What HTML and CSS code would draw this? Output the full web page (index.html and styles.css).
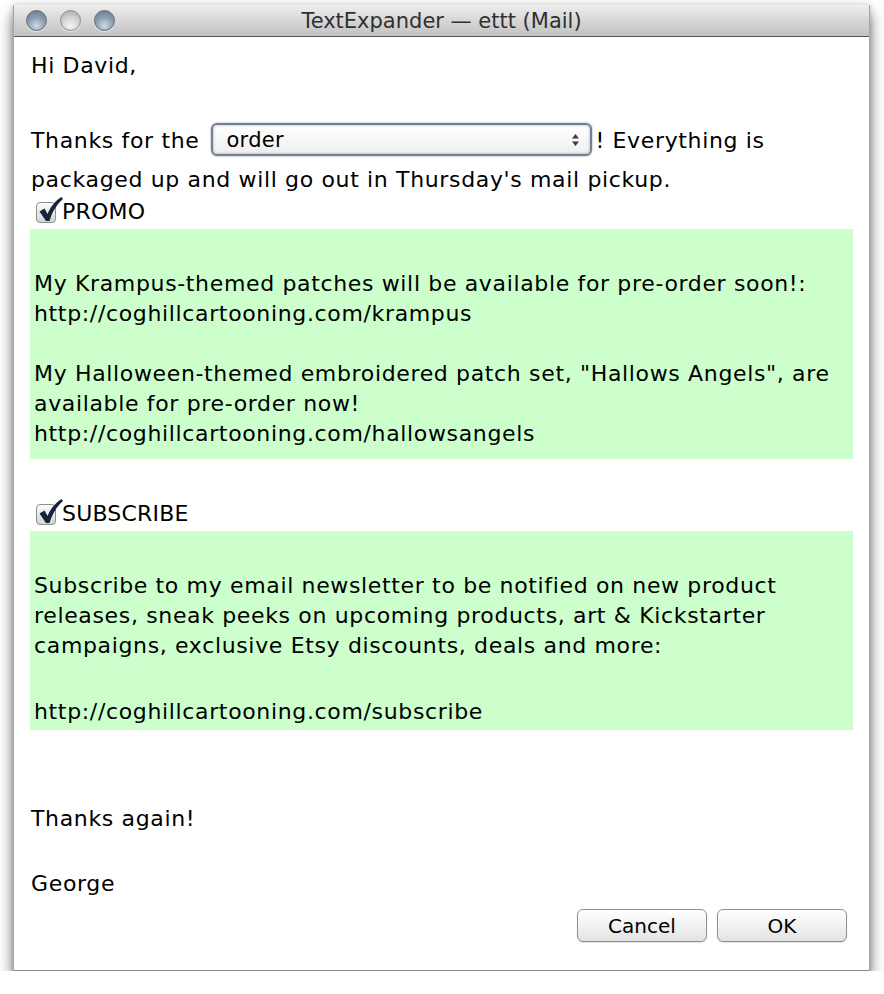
FILE: index.html
```html
<!DOCTYPE html>
<html>
<head>
    <meta charset="UTF-8">
    <title>TextExpander — ettt (Mail)</title>
    <link rel="stylesheet" href="styles.css">
</head>
<body>
    <div class="window">
        <div class="titlebar">
            <div class="lights">
                <span class="light graphite"></span>
                <span class="light grey"></span>
                <span class="light graphite"></span>
            </div>
            <div class="title">TextExpander — ettt (Mail)</div>
        </div>

        <div class="content">
            <p class="line">Hi David,</p>

            <div class="orderRow">
                <span>Thanks for the</span>
                <span class="popup"><span class="popupText">order</span><span class="arrows"><svg width="9" height="14" viewBox="0 0 9 14"><path d="M4.5 1 L8 5.5 L1 5.5 Z M4.5 13 L8 8.5 L1 8.5 Z" fill="#3b3b3b"/></svg></span></span>
                <span>! Everything is</span>
            </div>
            <p class="line packed">packaged up and will go out in Thursday's mail pickup.</p>

            <div class="check">
                <span class="box"><svg width="28" height="28" viewBox="0 0 28 28"><path d="M3.5 15.5 L8.5 12.5 L11.5 18 C14.5 11 19 5 25.5 1 L27 3 C21 8.5 16.5 15 13.5 25 L10 25 Z" fill="#16233d"/></svg></span>PROMO
            </div>
            <div class="snippet">
                <p class="line">&nbsp;</p>
                <p class="line">My Krampus-themed patches will be available for pre-order soon!:<br>http://coghillcartooning.com/krampus</p>
                <p class="line">&nbsp;</p>
                <p class="line">My Halloween-themed embroidered patch set, "Hallows Angels", are available for pre-order now!<br>http://coghillcartooning.com/hallowsangels</p>
            </div>

            <div class="check second">
                <span class="box"><svg width="28" height="28" viewBox="0 0 28 28"><path d="M3.5 15.5 L8.5 12.5 L11.5 18 C14.5 11 19 5 25.5 1 L27 3 C21 8.5 16.5 15 13.5 25 L10 25 Z" fill="#16233d"/></svg></span>SUBSCRIBE
            </div>
            <div class="snippet sub">
                <p class="line">&nbsp;</p>
                <p class="line">Subscribe to my email newsletter to be notified on new product releases, sneak peeks on upcoming products, art &amp; Kickstarter campaigns, exclusive Etsy discounts, deals and more:</p>
                <p class="line url">http://coghillcartooning.com/subscribe</p>
            </div>

            <p class="line thanks">Thanks again!</p>
            <p class="line sign">George</p>

            <div class="buttons">
                <button class="btn">Cancel</button>
                <button class="btn">OK</button>
            </div>
        </div>
    </div>
</body>
</html>
```

FILE: styles.css
```css
body{
    margin : 0;
    background-color : #ffffff;
    font-family : "DejaVu Sans", "Liberation Sans", sans-serif;
    color : #000000;
}

.window{
    box-sizing : border-box;
    width : 857px;
    margin : 5px 0 0 13px;
    background-color : #ffffff;
    border-left : 1px solid #a5a5a5;
    border-right : 1px solid #a5a5a5;
    border-bottom : 1px solid #8c8c8c;
    box-shadow : 0 9px 14px rgba(0,0,0,0.55), 0 0 6px rgba(0,0,0,0.18);
}

.titlebar{
    position : relative;
    box-sizing : border-box;
    height : 32px;
    background : linear-gradient(#ececec, #d6d6d6 50%, #c2c2c2);
    border-top : 1px solid #f4f4f4;
    border-bottom : 1px solid #575757;
}

.lights{
    position : absolute;
    left : 12px;
    top : 4px;
    display : flex;
    gap : 13px;
}

.light{
    width : 21px;
    height : 21px;
    border-radius : 50%;
    border : 1px solid #646b74;
    box-sizing : border-box;
    box-shadow : 0 1px 1px rgba(255,255,255,0.7);
}

.graphite{
    background : radial-gradient(circle at 50% 78%, #cfdbe6 0%, #8fa2b5 45%, #627487 100%);
}

.grey{
    border-color : #8a8a8a;
    background : radial-gradient(circle at 50% 78%, #f4f4f4 0%, #d2d2d2 50%, #a4a4a4 100%);
}

.title{
    text-align : center;
    font-size : 21px;
    line-height : 30px;
    color : #303030;
}

.content{
    padding : 14px 16px 28px 16px;
    letter-spacing : 0.65px;
}

.content p{
    margin : 0;
}

.line{
    font-size : 22px;
    line-height : 30px;
    padding-left : 1px;
}

.orderRow{
    display : flex;
    align-items : center;
    height : 39px;
    margin-top : 40px;
    padding-left : 1px;
    font-size : 22px;
}

.packed{
    line-height : 39px;
}

.popup{
    display : flex;
    align-items : center;
    box-sizing : border-box;
    width : 381px;
    height : 33px;
    margin-left : 12px;
    margin-right : 3px;
    padding : 0 10px 0 13px;
    border : 2px solid #74808f;
    border-radius : 6px;
    background : linear-gradient(#ffffff, #efefef);
    box-shadow : inset 0 0 3px rgba(90,110,140,0.55), 0 0 2px rgba(70,90,120,0.7);
    font-size : 21px;
    letter-spacing : 0.3px;
    position : relative;
    top : -1px;
}

.popupText{
    flex : 1;
    line-height : 28px;
}

.arrows{
    display : flex;
    align-items : center;
}

.check{
    display : flex;
    align-items : center;
    height : 24px;
    font-size : 22px;
    letter-spacing : 0.2px;
    padding-left : 6px;
}

.check.second{
    margin-top : 42px;
}

.box{
    position : relative;
    box-sizing : border-box;
    width : 20px;
    height : 21px;
    margin-top : 2px;
    margin-right : 6px;
    border : 1px solid #8e8e8e;
    border-radius : 4px;
    background : linear-gradient(#fdfdfd, #d4d4d4);
}

.box svg{
    position : absolute;
    left : -1px;
    top : -7px;
}

.snippet{
    margin-top : 6px;
    padding : 10px 5px 10px 4px;
    background-color : #ccffcc;
}

.snippet.sub{
    padding-bottom : 3px;
}

.snippet .line{
    padding-left : 0;
}

.snippet .url{
    margin-top : 36px;
}

.thanks{
    margin-top : 74px !important;
}

.sign{
    margin-top : 35px !important;
}

.buttons{
    display : flex;
    justify-content : flex-end;
    gap : 10px;
    margin-top : 10px;
    padding-right : 6px;
    letter-spacing : 0;
}

.btn{
    width : 130px;
    height : 33px;
    padding : 0;
    font-family : "DejaVu Sans", "Liberation Sans", sans-serif;
    font-size : 20px;
    color : #000000;
    border : 1px solid #8e8e8e;
    border-radius : 6px;
    background : linear-gradient(#ffffff, #f2f2f2 50%, #e2e2e2);
    box-shadow : 0 1px 1px rgba(0,0,0,0.12);
}
```
